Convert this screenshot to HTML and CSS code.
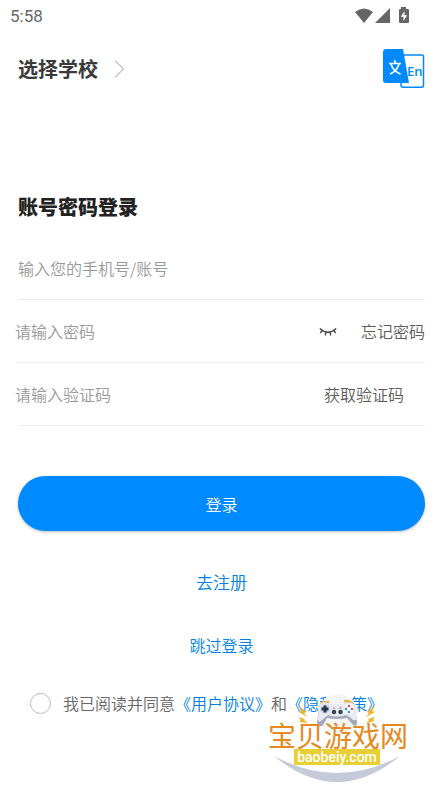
FILE: index.html
```html
<!DOCTYPE html>
<html lang="zh-CN">
<head>
<meta charset="utf-8">
<meta name="viewport" content="width=device-width, initial-scale=1">
<title>账号密码登录</title>
<link rel="stylesheet" href="styles.css">
</head>
<body>
<div class="status">
  <span>5:58</span>
  <svg class="status-icons" width="56" height="18" viewBox="0 0 56 18" aria-hidden="true">
    <path d="M0 5Q9-2 18 5L9 16Z"/>
    <path d="M35 1V16H20Z"/>
    <path fill-rule="evenodd" d="M46 0h5v2h2q1 0 1 1v12q0 1-1 1h-8q-1 0-1-1V3q0-1 1-1h1ZM49.500 4L45.800 9.800H48.400V14L52.200 8.200H49.500Z"/>
  </svg>
</div>
<header class="header">
  <button class="school" type="button">选择学校
    <svg width="12" height="20" viewBox="0 0 12 20" aria-hidden="true"><path d="M1 1.500L9.500 10L1 18.500" fill="none" stroke="#c8c8c8" stroke-width="1.500"/></svg>
  </button>
  <button class="language" type="button" aria-label="切换语言">
    <svg width="42" height="40" viewBox="0 0 42 40">
      <path d="M18 6H39Q40.500 6 40.500 8V36Q40.500 38.200 39 38.200H20Q18 38.200 18 36Z" fill="#fff" stroke="#008aff" stroke-width="1.500"/>
      <path d="M3 0H20L26 34H3Q0 34 0 31V3Q0 0 3 0Z" fill="#008aff"/>
      <path d="M6 14.500H18M11.500 11L12.500 14M16 15Q14 22 7 25M8 15Q10 22 17.500 25" fill="none" stroke="#fff" stroke-width="1.600"/>
      <text class="en" x="24" y="27">En</text>
    </svg>
  </button>
</header>
<main class="main">
  <h1 class="title">账号密码登录</h1>
  <form class="form">
    <div class="row">
      <input class="field" type="text" aria-label="手机号或账号" placeholder="输入您的手机号/账号">
    </div>
    <div class="row">
      <input class="field field-wide" type="password" aria-label="密码" placeholder="请输入密码">
      <button class="eye" type="button" aria-label="显示密码">
        <svg width="18" height="10" viewBox="0 0 18 10"><path d="M.8 2.500Q9 10 17.200 2.500M3.200 4.500L1.300 7M7 6L6.300 9.500M11 6L11.700 9.500M14.800 4.500L16.700 7" fill="none" stroke="#444" stroke-width="1.300"/></svg>
      </button>
      <a class="action" href="#forgot">忘记密码</a>
    </div>
    <div class="row">
      <input class="field field-wide" type="text" aria-label="验证码" placeholder="请输入验证码">
      <button class="action code" type="button">获取验证码</button>
    </div>
    <button class="submit" type="submit">登录</button>
    <a class="link register" href="#register">去注册</a>
    <a class="link" href="#skip">跳过登录</a>
    <div class="agreement">
      <input class="check" type="checkbox" id="agree">
      <label for="agree">我已阅读并同意<a href="#terms">《用户协议》</a>和<a href="#privacy">《隐私政策》</a></label>
      <svg class="watermark" width="144" height="92" viewBox="0 0 144 92" role="img" aria-label="宝贝游戏网 baobeiy.com">
        <circle cx="70" cy="23" r="20" fill="#f4f5f9" opacity=".95"/>
        <path d="M6 65Q69 117 132 65Q69 99 6 65Z" fill="#c5cad8"/>
        <g fill="#efb32d">
          <path d="M31 15L39 21L36 22L39 26L31 21L34 20ZM30 26L37 28L36 29L40 32L31 31L33 29Z"/>
          <path d="M107 15L99 21L101 22L98 26L107 21L104 20ZM107 26L100 28L101 29L98 32L107 30L105 29Z"/>
          <path d="M52 12L56 10H61V12L52 14ZM76 11V9H81L86 12V14L81 12Z"/>
        </g>
        <path d="M54 12Q58 10 62 13H76Q80 10 84 12Q87 13 87 17L89 31Q89 37 85 34L79 27Q69 29 59 27L55 34Q50 38 49 32L51 17Q51 13 54 12Z" fill="#a4a9ba"/>
        <path d="M54 12Q58 10 62 13H76Q80 10 84 12Q87 13 87 17L89 28Q86 31 83 27L78 24Q69 27 60 24L54 29Q50 33 50 28L51 17Q51 13 54 12Z" fill="#e9ebf3"/>
        <circle cx="57" cy="18" r="5" fill="#d7dae6"/><circle cx="81" cy="18" r="5" fill="#fff"/>
        <path d="M55.500 14.500H58.500V16.500H60.500V19.500H58.500V21.500H55.500V19.500H53.500V16.500H55.500Z" fill="#253848"/>
        <circle cx="66" cy="21" r="2.200" fill="#314253"/><circle cx="72.500" cy="21" r="2.200" fill="#314253"/>
        <path d="M65 17H67M71.500 17H73.500" stroke="#d75462"/>
        <circle cx="81" cy="15" r="1.300" fill="#df4b5b"/><circle cx="84" cy="18" r="1.300" fill="#df4b5b"/><circle cx="78" cy="18" r="1.300" fill="#2e9cca"/><circle cx="81" cy="21" r="1.300" fill="#2e9cca"/>
        <text class="brand" x="0" y="56">宝贝游戏网</text>
        <path d="M26 58H112V74H26Z" fill="#e8cf35"/>
        <text class="domain" x="69" y="71" text-anchor="middle">baobeiy.com</text>
      </svg>
    </div>
  </form>
</main>
</body>
</html>
```
FILE: styles.css
```css
* {
  box-sizing: border-box;
}

body {
  min-height: 100vh;
  margin: 0;
  background: #fff;
  color: #666;
  font: 350 16px/24px "Noto Sans CJK SC", sans-serif;
}

button,
input {
  margin: 0;
  padding: 0;
  border: 0;
  background: none;
  color: inherit;
  font: inherit;
}

a {
  color: #0080e0;
  text-decoration: none;
}

svg {
  display: block;
}

.status {
  display: flex;
  align-items: center;
  justify-content: space-between;
  height: 31px;
  padding: 0 32px 0 10px;
  font: 400 17px/20px Roboto, sans-serif;
}

.status-icons {
  fill: #666;
}

.header {
  display: flex;
  align-items: center;
  justify-content: space-between;
  padding: 18px 18px 16px;
}

.school {
  display: flex;
  align-items: center;
  gap: 16px;
  color: #3a3a3a;
  font-size: 20px;
  font-weight: 700;
}

.en {
  fill: #008aff;
  font: 600 13px "Open Sans", sans-serif;
}

.main {
  padding: 87px 18px 60px;
}

.title {
  margin: 0 0 15px;
  color: #222;
  font-size: 20px;
  line-height: 30px;
  font-weight: 900;
}

.row {
  display: flex;
  align-items: center;
  height: 63px;
  border-bottom: 1px solid #ececec;
}

.field {
  flex: 1;
  min-width: 0;
  height: 40px;
  outline: 0;
}

.field-wide {
  margin-left: -3px;
}

.field::placeholder {
  color: #999;
  opacity: 1;
}

.eye {
  margin-right: 24px;
}

.action {
  color: #5c5c5c;
}

.code {
  padding-right: 21px;
}

.submit {
  display: block;
  width: 100%;
  height: 55px;
  margin-top: 50px;
  border-radius: 28px;
  background: #008aff;
  box-shadow: 0 1px 3px #0004;
  color: #fff;
}

.link {
  display: block;
  width: fit-content;
  margin: 39px auto 0;
}

.register {
  font-size: 17px;
}

.agreement {
  position: relative;
  display: flex;
  align-items: center;
  gap: 12px;
  margin-top: 34px;
  padding-left: 12px;
  white-space: nowrap;
}

.check {
  flex: none;
  width: 21px;
  height: 21px;
  border: 1px solid #bbb;
  border-radius: 50%;
  appearance: none;
}

.check:checked {
  background: #008aff;
}

.watermark {
  position: absolute;
  top: 0;
  left: 250px;
  pointer-events: none;
}

.brand {
  fill: #e58a1e;
  font: 400 28px "Noto Sans CJK SC", sans-serif;
}

.domain {
  fill: #fff;
  font: 500 14px Roboto, sans-serif;
}
```
